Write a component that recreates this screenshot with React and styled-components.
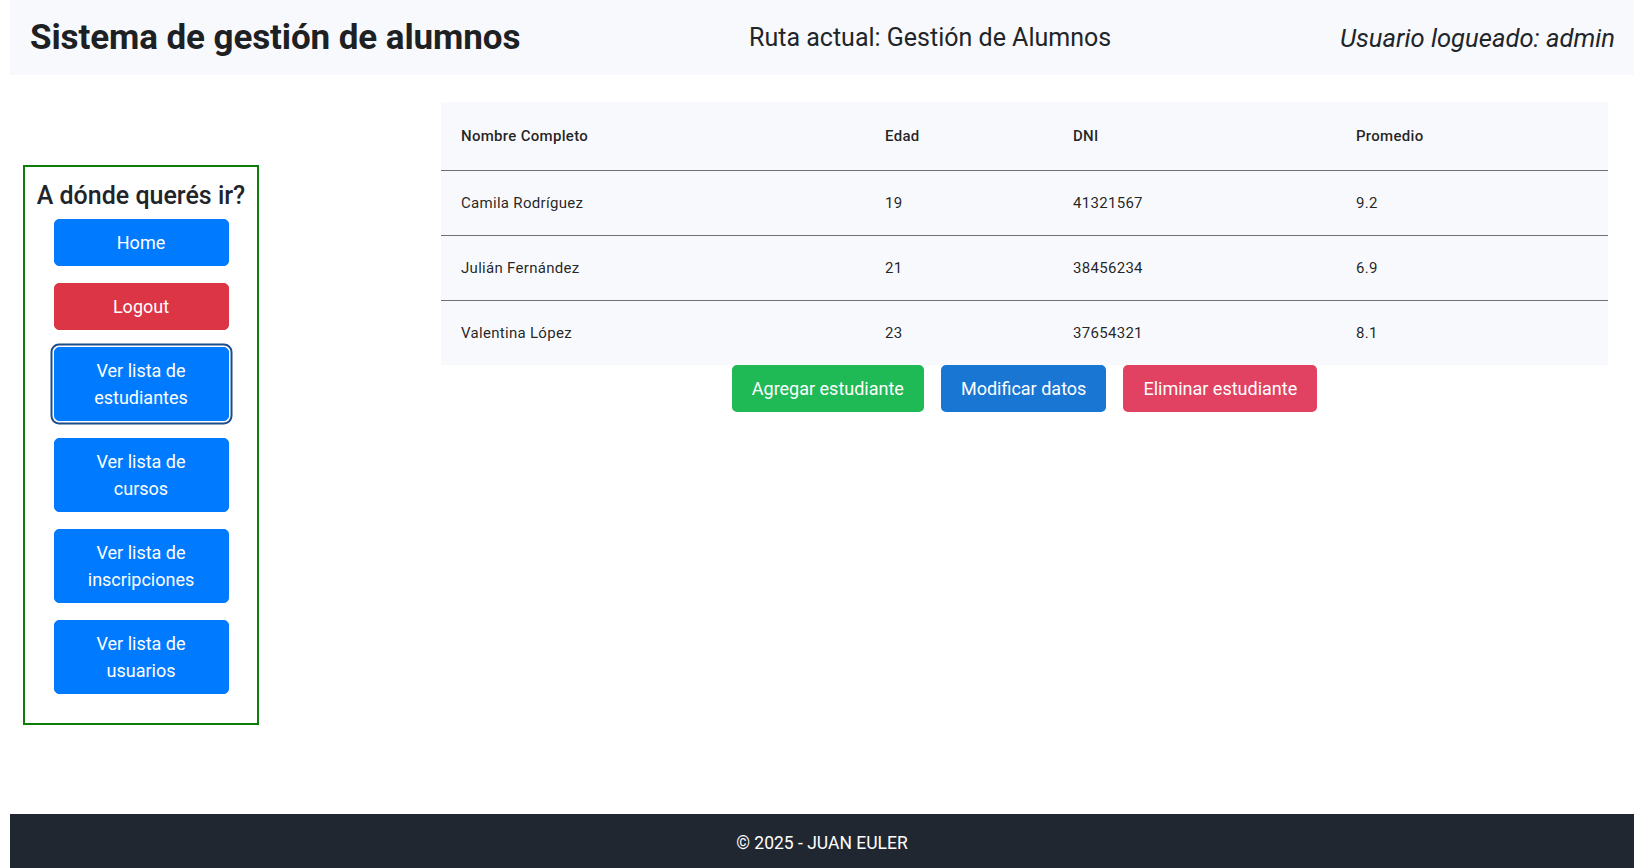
import React from 'react';
import styled, { createGlobalStyle } from 'styled-components';

const GlobalStyle = createGlobalStyle`
  * { box-sizing: border-box; }
  body {
    margin: 0;
    font-family: Roboto, "Liberation Sans", sans-serif;
    color: #212529;
    background: #fff;
  }
`;

const Page = styled.div`
  margin: 0 8px 0 10px;
  display: flex;
  flex-direction: column;
`;

const Header = styled.header`
  height: 75px;
  background: #f8f9fc;
  display: flex;
  align-items: center;
  justify-content: space-between;
  padding: 0 19px 0 20px;
`;

const Title = styled.h1`
  margin: 0;
  font-size: 35px;
  font-weight: 700;
  color: #1e2124;
  letter-spacing: -0.1px;
`;

const Route = styled.div`
  font-size: 25px;
  color: #212529;
`;

const User = styled.div`
  font-size: 25.6px;
  font-style: italic;
  color: #212529;
`;

const Main = styled.main`
  min-height: 739px;
  display: grid;
  grid-template-columns: 406px 1fr;
`;

const Aside = styled.aside`
  display: flex;
  align-items: center;
  padding-left: 13px;
`;

const NavBox = styled.nav`
  width: 236px;
  border: 2px solid #0b7d0b;
  padding: 14px 0 29px;
  display: flex;
  flex-direction: column;
  align-items: center;
`;

const NavTitle = styled.h3`
  margin: 0 0 9px;
  font-size: 25px;
  font-weight: 500;
  line-height: 29px;
  color: #212529;
`;

const NavList = styled.div`
  display: flex;
  flex-direction: column;
  gap: 17px;
`;

const NavButton = styled.button`
  width: 175px;
  padding: 9px 24px;
  border: 1px solid ${(p) => (p.danger ? '#dc3545' : '#007bff')};
  border-radius: 5px;
  background: ${(p) => (p.danger ? '#dc3545' : '#007bff')};
  color: #fff;
  font-family: inherit;
  font-size: 18px;
  line-height: 27px;
  text-align: center;
  cursor: pointer;
  box-shadow: ${(p) => (p.active ? '0 0 0 1.5px #fff, 0 0 0 3.5px #1c4d8a' : 'none')};
`;

const Content = styled.section`
  padding: 27px 26px 0 25px;
  display: flex;
  flex-direction: column;
  align-items: center;
`;

const Table = styled.table`
  width: 100%;
  border-collapse: collapse;
  background: #f8f9fc;
  font-size: 15px;
  letter-spacing: 0.3px;
  color: rgba(0, 0, 0, 0.87);
`;

const Th = styled.th`
  text-align: left;
  font-weight: 500;
  padding: 24px 20px;
  line-height: 20px;
  border-bottom: 1px solid #6c7078;
`;

const Td = styled.td`
  padding: 22px 20px;
  line-height: 20px;
  border-bottom: ${(p) => (p.last ? 'none' : '1px solid #6c7078')};
`;

const Actions = styled.div`
  display: flex;
  gap: 17px;
`;

const ActionButton = styled.button`
  height: 47px;
  padding: 0 20px;
  border: none;
  border-radius: 5px;
  background: ${(p) => p.bg};
  color: #fff;
  font-family: inherit;
  font-size: 18px;
  cursor: pointer;
`;

const Footer = styled.footer`
  height: 54px;
  padding-top: 4px;
  background: #212731;
  color: #fff;
  display: flex;
  align-items: center;
  justify-content: center;
  font-size: 17.5px;
`;

const students = [
  { name: 'Camila Rodríguez', age: 19, dni: '41321567', avg: '9.2' },
  { name: 'Julián Fernández', age: 21, dni: '38456234', avg: '6.9' },
  { name: 'Valentina López', age: 23, dni: '37654321', avg: '8.1' },
];

const navItems = [
  { label: 'Home' },
  { label: 'Logout', danger: true },
  { label: 'Ver lista de estudiantes', active: true },
  { label: 'Ver lista de cursos' },
  { label: 'Ver lista de inscripciones' },
  { label: 'Ver lista de usuarios' },
];

const cols = ['424px', '188px', '283px', 'auto'];

const App = () => {
  return (
    <>
      <GlobalStyle />
      <Page>
        <Header>
          <Title>Sistema de gestión de alumnos</Title>
          <Route>Ruta actual: Gestión de Alumnos</Route>
          <User>Usuario logueado: admin</User>
        </Header>
        <Main>
          <Aside>
            <NavBox>
              <NavTitle>A dónde querés ir?</NavTitle>
              <NavList>
                {navItems.map((item) => (
                  <NavButton key={item.label} danger={item.danger} active={item.active}>
                    {item.label}
                  </NavButton>
                ))}
              </NavList>
            </NavBox>
          </Aside>
          <Content>
            <Table>
              <colgroup>
                {cols.map((w, i) => (
                  <col key={i} style={{ width: w }} />
                ))}
              </colgroup>
              <thead>
                <tr>
                  <Th>Nombre Completo</Th>
                  <Th>Edad</Th>
                  <Th>DNI</Th>
                  <Th>Promedio</Th>
                </tr>
              </thead>
              <tbody>
                {students.map((s, i) => {
                  const last = i === students.length - 1;
                  return (
                    <tr key={s.dni}>
                      <Td last={last}>{s.name}</Td>
                      <Td last={last}>{s.age}</Td>
                      <Td last={last}>{s.dni}</Td>
                      <Td last={last}>{s.avg}</Td>
                    </tr>
                  );
                })}
              </tbody>
            </Table>
            <Actions>
              <ActionButton bg="#1fb955">Agregar estudiante</ActionButton>
              <ActionButton bg="#1976d2">Modificar datos</ActionButton>
              <ActionButton bg="#e14262">Eliminar estudiante</ActionButton>
            </Actions>
          </Content>
        </Main>
        <Footer>© 2025 - JUAN EULER</Footer>
      </Page>
    </>
  );
};

export default App;
